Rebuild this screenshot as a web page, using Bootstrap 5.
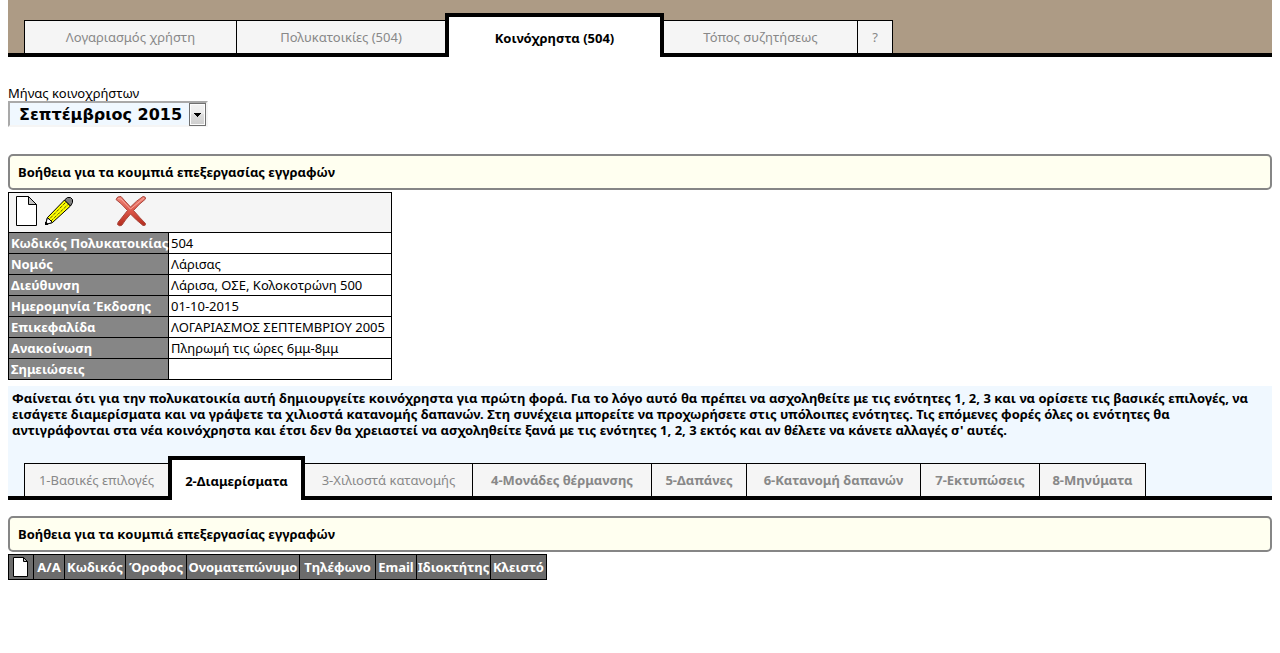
<!DOCTYPE html>
<html lang="el">
<head>
<meta charset="utf-8">
<meta name="viewport" content="width=device-width, initial-scale=1">
<title>Κοινόχρηστα</title>
<link rel="stylesheet" href="https://cdn.jsdelivr.net/npm/bootstrap@5.3.0/dist/css/bootstrap.min.css">
<style>
  body { font: 13px/16px "Noto Sans", "DejaVu Sans", sans-serif; color: #000; background: #fff; }
  .band { border-bottom: 4px solid #000; }
  .band-main { background: #ad9b85; }
  .band-sub { background: #f0f8ff; margin-top: 6px; }
  .tabs { display: grid; align-items: end; padding: 0 16px; margin-bottom: -4px; }
  .tabs-main { grid-template-columns: 212px 209px 219px 193px 36px; padding-top: 13px; }
  .tabs-sub { grid-template-columns: 144px 137px 167px 179px 95px 174px 119px 107px; padding-top: 14px; }
  .tabs .nav-link { height: 33px; margin-bottom: 4px; padding: 0; display: flex; align-items: center; justify-content: center;
    white-space: nowrap; color: #888; background: #f5f5f5; border: 1px solid #000; border-width: 1px 0 0 1px; border-radius: 0; }
  .tabs li:last-child .nav-link { border-right-width: 1px; }
  .tabs .nav-link.active { height: 44px; margin-bottom: 0; color: #000; background: #fff; border: 4px solid #000; border-bottom: 0; font-weight: 700; padding-top: 2px; }
  .tabs .active-next .nav-link { border-left: 0; }
  .month { height: 26px; width: 200px; position: relative; border: 2px solid; border-color: #a9a9a9 #f5f5f5 #f5f5f5 #a9a9a9; background: #f0f8ff; }
  .month select { appearance: none; border: 0; background: transparent; width: 100%; height: 24px; padding: 0 10px 0 9px; font: 700 16px/24px "DejaVu Sans", sans-serif; color: #000; }
  .month svg { position: absolute; right: 0; top: 0; pointer-events: none; }
  .help { border: 2px solid #868686; border-radius: 5px; background: #fffff0; padding: 8px; margin-bottom: 2px; }
  .help-first { margin-top: 27px; }
  .help button { display: block; padding: 0; border: 0; background: none; font-weight: 700; color: #000; line-height: 16px; }
  .notice { padding: 4px; }
  .grid-table { border-collapse: collapse; line-height: 16px; table-layout: fixed; }
  .grid-table th, .grid-table td { border: 1px solid #000; padding: 2px; white-space: nowrap; }
  .record { width: 384px; }
  .record .names { width: 160px; }
  .record th { background: #868686; color: #fff; padding-right: 0; }
  .record td { padding-right: 0; }
  .record .tools { background: #f5f5f5; height: 40px; padding: 0 2px 4px; }
  .delete-btn { margin-left: 40px; }
  .flats { width: 539px; }
  .flats th { background: #6c6c6c; color: #fff; height: 25px; padding: 0; text-align: center; }
  .icon-btn { padding: 0; border: 0; background: none; display: block; line-height: 0; }
</style>
</head>
<body class="px-2">
<header class="band band-main">
  <ul class="nav tabs tabs-main">
    <li><a class="nav-link" href="#">Λογαριασμός χρήστη</a></li>
    <li><a class="nav-link" href="#">Πολυκατοικίες (504)</a></li>
    <li><a class="nav-link active" aria-current="page" href="#">Κοινόχρηστα (504)</a></li>
    <li class="active-next"><a class="nav-link" href="#">Τόπος συζητήσεως</a></li>
    <li><a class="nav-link" href="#">?</a></li>
  </ul>
</header>

<main>
  <div class="pt-4 mt-1">
    <label for="month" class="d-block">Μήνας κοινοχρήστων</label>
    <div class="month">
      <select id="month"><option>Σεπτέμβριος 2015</option></select>
      <svg width="17" height="23" viewBox="0 0 17 23" aria-hidden="true">
        <defs><linearGradient id="btn" x1="0" y1="0" x2="0" y2="1"><stop offset="0" stop-color="#f2f2f2"/><stop offset=".5" stop-color="#ebebeb"/><stop offset=".5" stop-color="#dddddd"/><stop offset="1" stop-color="#cfcfcf"/></linearGradient></defs>
        <rect x=".5" y=".5" width="16" height="22" fill="#fcfcfc" stroke="#707070"/>
        <rect x="2" y="2" width="13" height="19" fill="url(#btn)"/>
        <path d="M5 10h7v1h-1v1h-1v1h-1v1h-1v-1h-1v-1h-1v-1h-1z"/>
      </svg>
    </div>
  </div>

  <section class="help help-first"><button type="button">Βοήθεια για τα κουμπιά επεξεργασίας εγγραφών</button></section>

  <table class="grid-table record">
    <colgroup><col class="names"><col></colgroup>
    <tr><td colspan="2" class="tools">
      <div class="d-flex align-items-center">
        <button type="button" class="icon-btn" aria-label="Νέα εγγραφή"><svg width="32" height="32" viewBox="0 0 32 32"><path d="M5.500 1.500h12l8 8v21h-20z" fill="#fff" stroke="#000"/><path d="M17.500 1.500v8h8z" fill="#c0c0c0" stroke="#000"/></svg></button>
        <button type="button" class="icon-btn" aria-label="Επεξεργασία"><svg width="32" height="32" viewBox="0 0 32 32"><path d="M2.500 29.500l2-7L21.500 5l6 6L9.500 27.500z" fill="#ff0" stroke="#000"/><path d="M2.500 29.500l2-7 5 5z" fill="#fff" stroke="#000"/><path d="M21.500 5l3-2.500h3l2 2v3l-2 3.500z" fill="#808080" stroke="#000"/><path d="M6 24.500L23 7M8 26L25.500 9" stroke="#000" stroke-dasharray="1 1"/><path d="M2 30v-3h1.500l1.500 2v1z"/></svg></button>
        <button type="button" class="icon-btn delete-btn" aria-label="Διαγραφή">
          <svg width="32" height="32" viewBox="0 0 32 32">
            <defs><linearGradient id="cross" x1="0" y1="0" x2="0" y2="1"><stop offset="0" stop-color="#f08578"/><stop offset=".5" stop-color="#dc5648"/><stop offset="1" stop-color="#b32b1c"/></linearGradient></defs>
            <path d="M1 4.500Q2 1 6 1.500Q9 5 15.500 12Q21 6 28 1.500Q31 1.500 30.500 4Q24 9 18.500 15.500Q25 23 30.500 28.500Q31 31 28 30.500Q21 25 15.500 19Q10 25 7 30Q5 32 2.500 29.500Q2.500 27 5 25L12.500 15.500Q6 8 1 4.500z" fill="url(#cross)" stroke="#a8473d" stroke-width="1"/>
            <path d="M3 3.500l3 .5 9.500 10L29 3" fill="none" stroke="#f7a79d" stroke-width="1"/>
          </svg>
        </button>
      </div>
    </td></tr>
    <tr><th scope="row">Κωδικός Πολυκατοικίας</th><td>504</td></tr>
    <tr><th scope="row">Νομός</th><td>Λάρισας</td></tr>
    <tr><th scope="row">Διεύθυνση</th><td>Λάρισα, ΟΣΕ, Κολοκοτρώνη 500</td></tr>
    <tr><th scope="row">Ημερομηνία Έκδοσης</th><td>01-10-2015</td></tr>
    <tr><th scope="row">Επικεφαλίδα</th><td>ΛΟΓΑΡΙΑΣΜΟΣ ΣΕΠΤΕΜΒΡΙΟΥ 2005</td></tr>
    <tr><th scope="row">Ανακοίνωση</th><td>Πληρωμή τις ώρες 6μμ-8μμ</td></tr>
    <tr><th scope="row">Σημειώσεις</th><td></td></tr>
  </table>

  <div class="band band-sub mb-3">
    <p class="notice fw-bold m-0">Φαίνεται ότι για την πολυκατοικία αυτή δημιουργείτε κοινόχρηστα για πρώτη φορά. Για το λόγο αυτό θα πρέπει να ασχοληθείτε με τις ενότητες 1, 2, 3 και να ορίσετε τις βασικές επιλογές, να εισάγετε διαμερίσματα και να γράψετε τα χιλιοστά κατανομής δαπανών. Στη συνέχεια μπορείτε να προχωρήσετε στις υπόλοιπες ενότητες. Τις επόμενες φορές όλες οι ενότητες θα αντιγράφονται στα νέα κοινόχρηστα και έτσι δεν θα χρειαστεί να ασχοληθείτε ξανά με τις ενότητες 1, 2, 3 εκτός και αν θέλετε να κάνετε αλλαγές σ' αυτές.</p>
    <ul class="nav tabs tabs-sub">
      <li><a class="nav-link" href="#">1-Βασικές επιλογές</a></li>
      <li><a class="nav-link active" aria-current="page" href="#">2-Διαμερίσματα</a></li>
      <li class="active-next"><a class="nav-link" href="#">3-Χιλιοστά κατανομής</a></li>
      <li><a class="nav-link fw-bold" href="#">4-Μονάδες θέρμανσης</a></li>
      <li><a class="nav-link fw-bold" href="#">5-Δαπάνες</a></li>
      <li><a class="nav-link fw-bold" href="#">6-Κατανομή δαπανών</a></li>
      <li><a class="nav-link fw-bold" href="#">7-Εκτυπώσεις</a></li>
      <li><a class="nav-link fw-bold" href="#">8-Μηνύματα</a></li>
    </ul>
  </div>

  <section class="help"><button type="button">Βοήθεια για τα κουμπιά επεξεργασίας εγγραφών</button></section>

  <table class="grid-table flats">
    <colgroup><col style="width:25px"><col style="width:31px"><col style="width:61px"><col style="width:61px"><col style="width:113px"><col style="width:76px"><col style="width:41px"><col style="width:74px"><col style="width:56px"></colgroup>
    <thead><tr>
      <th scope="col"><button type="button" class="icon-btn mx-auto" aria-label="Νέα εγγραφή"><svg width="16" height="22" viewBox="0 0 16 22"><path d="M.5 1.500h10l4 4v15h-14z" fill="#fff" stroke="#000"/><path d="M10.500 1.500v4h4z" fill="#c0c0c0" stroke="#000"/></svg></button></th>
      <th scope="col">Α/Α</th><th scope="col">Κωδικός</th><th scope="col">Όροφος</th><th scope="col">Ονοματεπώνυμο</th><th scope="col">Τηλέφωνο</th><th scope="col">Email</th><th scope="col">Ιδιοκτήτης</th><th scope="col">Κλειστό</th>
    </tr></thead>
  </table>
</main>
<script src="https://cdn.jsdelivr.net/npm/bootstrap@5.3.0/dist/js/bootstrap.bundle.min.js"></script>
</body>
</html>
